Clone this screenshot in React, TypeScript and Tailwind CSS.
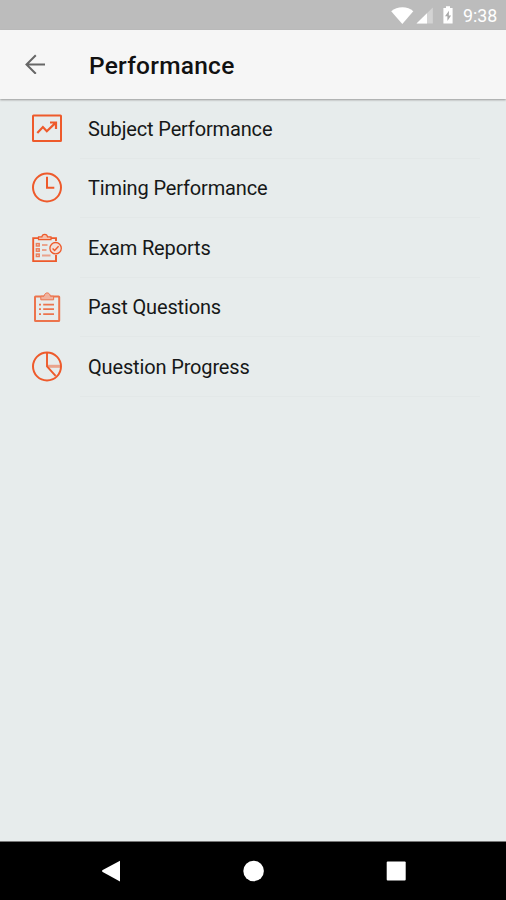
import type { ReactNode } from "react";

const ORANGE = "#ee5a2b";

function Icon({ children }: { children: ReactNode }) {
  return (
    <svg className="size-8 shrink-0" viewBox="0 0 32 32" fill="none" stroke={ORANGE} strokeWidth="2">
      {children}
    </svg>
  );
}

const items: { label: string; icon: ReactNode }[] = [
  {
    label: "Subject Performance",
    icon: (
      <Icon>
        <rect x="2" y="2.5" width="28" height="25.5" rx="0.5" />
        <path d="M6.3 19.9l5.6-5.8 3.9 4.1 8.7-8.3M19 9.5h6v6.4" strokeWidth="2.2" />
      </Icon>
    ),
  },
  {
    label: "Timing Performance",
    icon: (
      <Icon>
        <circle cx="16" cy="15.5" r="14" />
        <path d="M16 4.8v10.9h7.3" />
      </Icon>
    ),
  },
  {
    label: "Exam Reports",
    icon: (
      <Icon>
        <path d="M25 9V6.100H2.200v23H25V23" strokeWidth="1.9" />
        <path d="M7.5 7.700V4.900h3.400c.4-3.400 5.200-3.400 5.600 0H20v2.800z" fill="#f4c0ad" strokeWidth="1.2" />
        <g strokeWidth="1.5" opacity="0.75">
          <rect x="5.4" y="11.6" width="2.8" height="2.4" />
          <rect x="5.4" y="16.8" width="2.8" height="2.4" />
          <rect x="5.4" y="22.1" width="2.8" height="2.4" />
        </g>
        <path d="M11 13h5.500M11 18.100h4.500M11 23.400h8.500" strokeWidth="2" opacity="0.5" />
        <circle cx="24.6" cy="16.2" r="5.7" fill="#f2ded7" strokeWidth="1.3" />
        <path d="M21.600 16.500l2 2 4-4.200" strokeWidth="1.4" />
      </Icon>
    ),
  },
  {
    label: "Past Questions",
    icon: (
      <Icon>
        <g opacity="0.82">
          <rect x="4" y="5.5" width="24.2" height="24.5" rx="0.6" />
          <path d="M9.800 8.800V5.200h3.200c.8-4.400 5.600-4.400 6.400 0h3.200v3.600z" fill="#f2a68e" strokeWidth="1" />
          <path d="M8 13.700h2M8 18.200h2M8 23.200h2M12.200 13.700H23M12.200 18.200H23M12.200 23.200H23" strokeWidth="1.8" />
        </g>
      </Icon>
    ),
  },
  {
    label: "Question Progress",
    icon: (
      <Icon>
        <path d="M16 15.300h13" strokeWidth="3" opacity="0.5" />
        <circle cx="16" cy="15.5" r="14" />
        <path d="M16 2v13.300l8.600 9.600" strokeWidth="1.9" />
      </Icon>
    ),
  },
];

function StatusBar() {
  return (
    <div className="flex h-[30px] shrink-0 items-center justify-end bg-[#bcbcbc] pr-[9px] text-white">
      <svg className="h-[30px] w-[70px]" viewBox="0 0 70 30" fill="#fff">
        <path d="M5.2 11.2C11 6 22 6 27.3 11.2L16.3 24z" />
        <path d="M46.8 7.5V23.5H30.500z" opacity="0.35" />
        <path d="M41 13.200V23.500H30.500z" />
        <path d="M57.4 8.1h2.600V6.300h4v1.800h2.600v15.500h-9.200z" />
        <path d="M63 10.800l-4 5.500h2.400v4.700l3.700-5.600h-2.300z" fill="#a9a9a9" />
      </svg>
      <span className="ml-[7px] w-[34px] whitespace-nowrap pt-0.5 text-[17.8px] leading-7">9:38</span>
    </div>
  );
}

export default function App() {
  return (
    <div className="flex h-[900px] w-[506px] flex-col overflow-hidden bg-[#e7ecec] font-['Roboto',sans-serif]">
      <StatusBar />
      <header className="flex h-[69px] shrink-0 items-center bg-[#f6f6f6] pl-[25px] shadow-[0_1px_2px_#999]">
        <svg className="h-5 w-5 -translate-y-px" viewBox="0 0 20 20" fill="none" stroke="#666" strokeWidth="2">
          <path d="M20 10.5H1.5M10.8 1.2L1.500 10.500l9.300 9.300" />
        </svg>
        <h1 className="ml-11 pt-[3px] text-[24.5px] font-medium leading-8 tracking-[0.25px] text-[#111]">Performance</h1>
      </header>
      <ul className="flex-1">
        {items.map(({ label, icon }) => (
          <li key={label} className="flex h-[59.5px] items-center pl-[31px] pr-[26px]">
            {icon}
            <div className="ml-[17px] flex h-full flex-1 items-center border-b border-[#e3e8e8] pl-2">
              <span className="pt-px text-[20px] leading-6 tracking-[-0.15px] text-[#161818]">{label}</span>
            </div>
          </li>
        ))}
      </ul>
      <nav className="flex h-[59px] shrink-0 items-center border-t border-[#777] bg-black pl-[102px]">
        <svg className="h-[22px] w-[304px]" viewBox="0 0 304 22" fill="#fff">
          <path d="M0 11q0-.6.700-1L18 .7V21.500L.7 12Q0 11.500 0 11z" />
          <circle cx="151.600" cy="11" r="10.300" />
          <rect x="284.700" y="1.500" width="19" height="19" rx="1" />
        </svg>
      </nav>
    </div>
  );
}
